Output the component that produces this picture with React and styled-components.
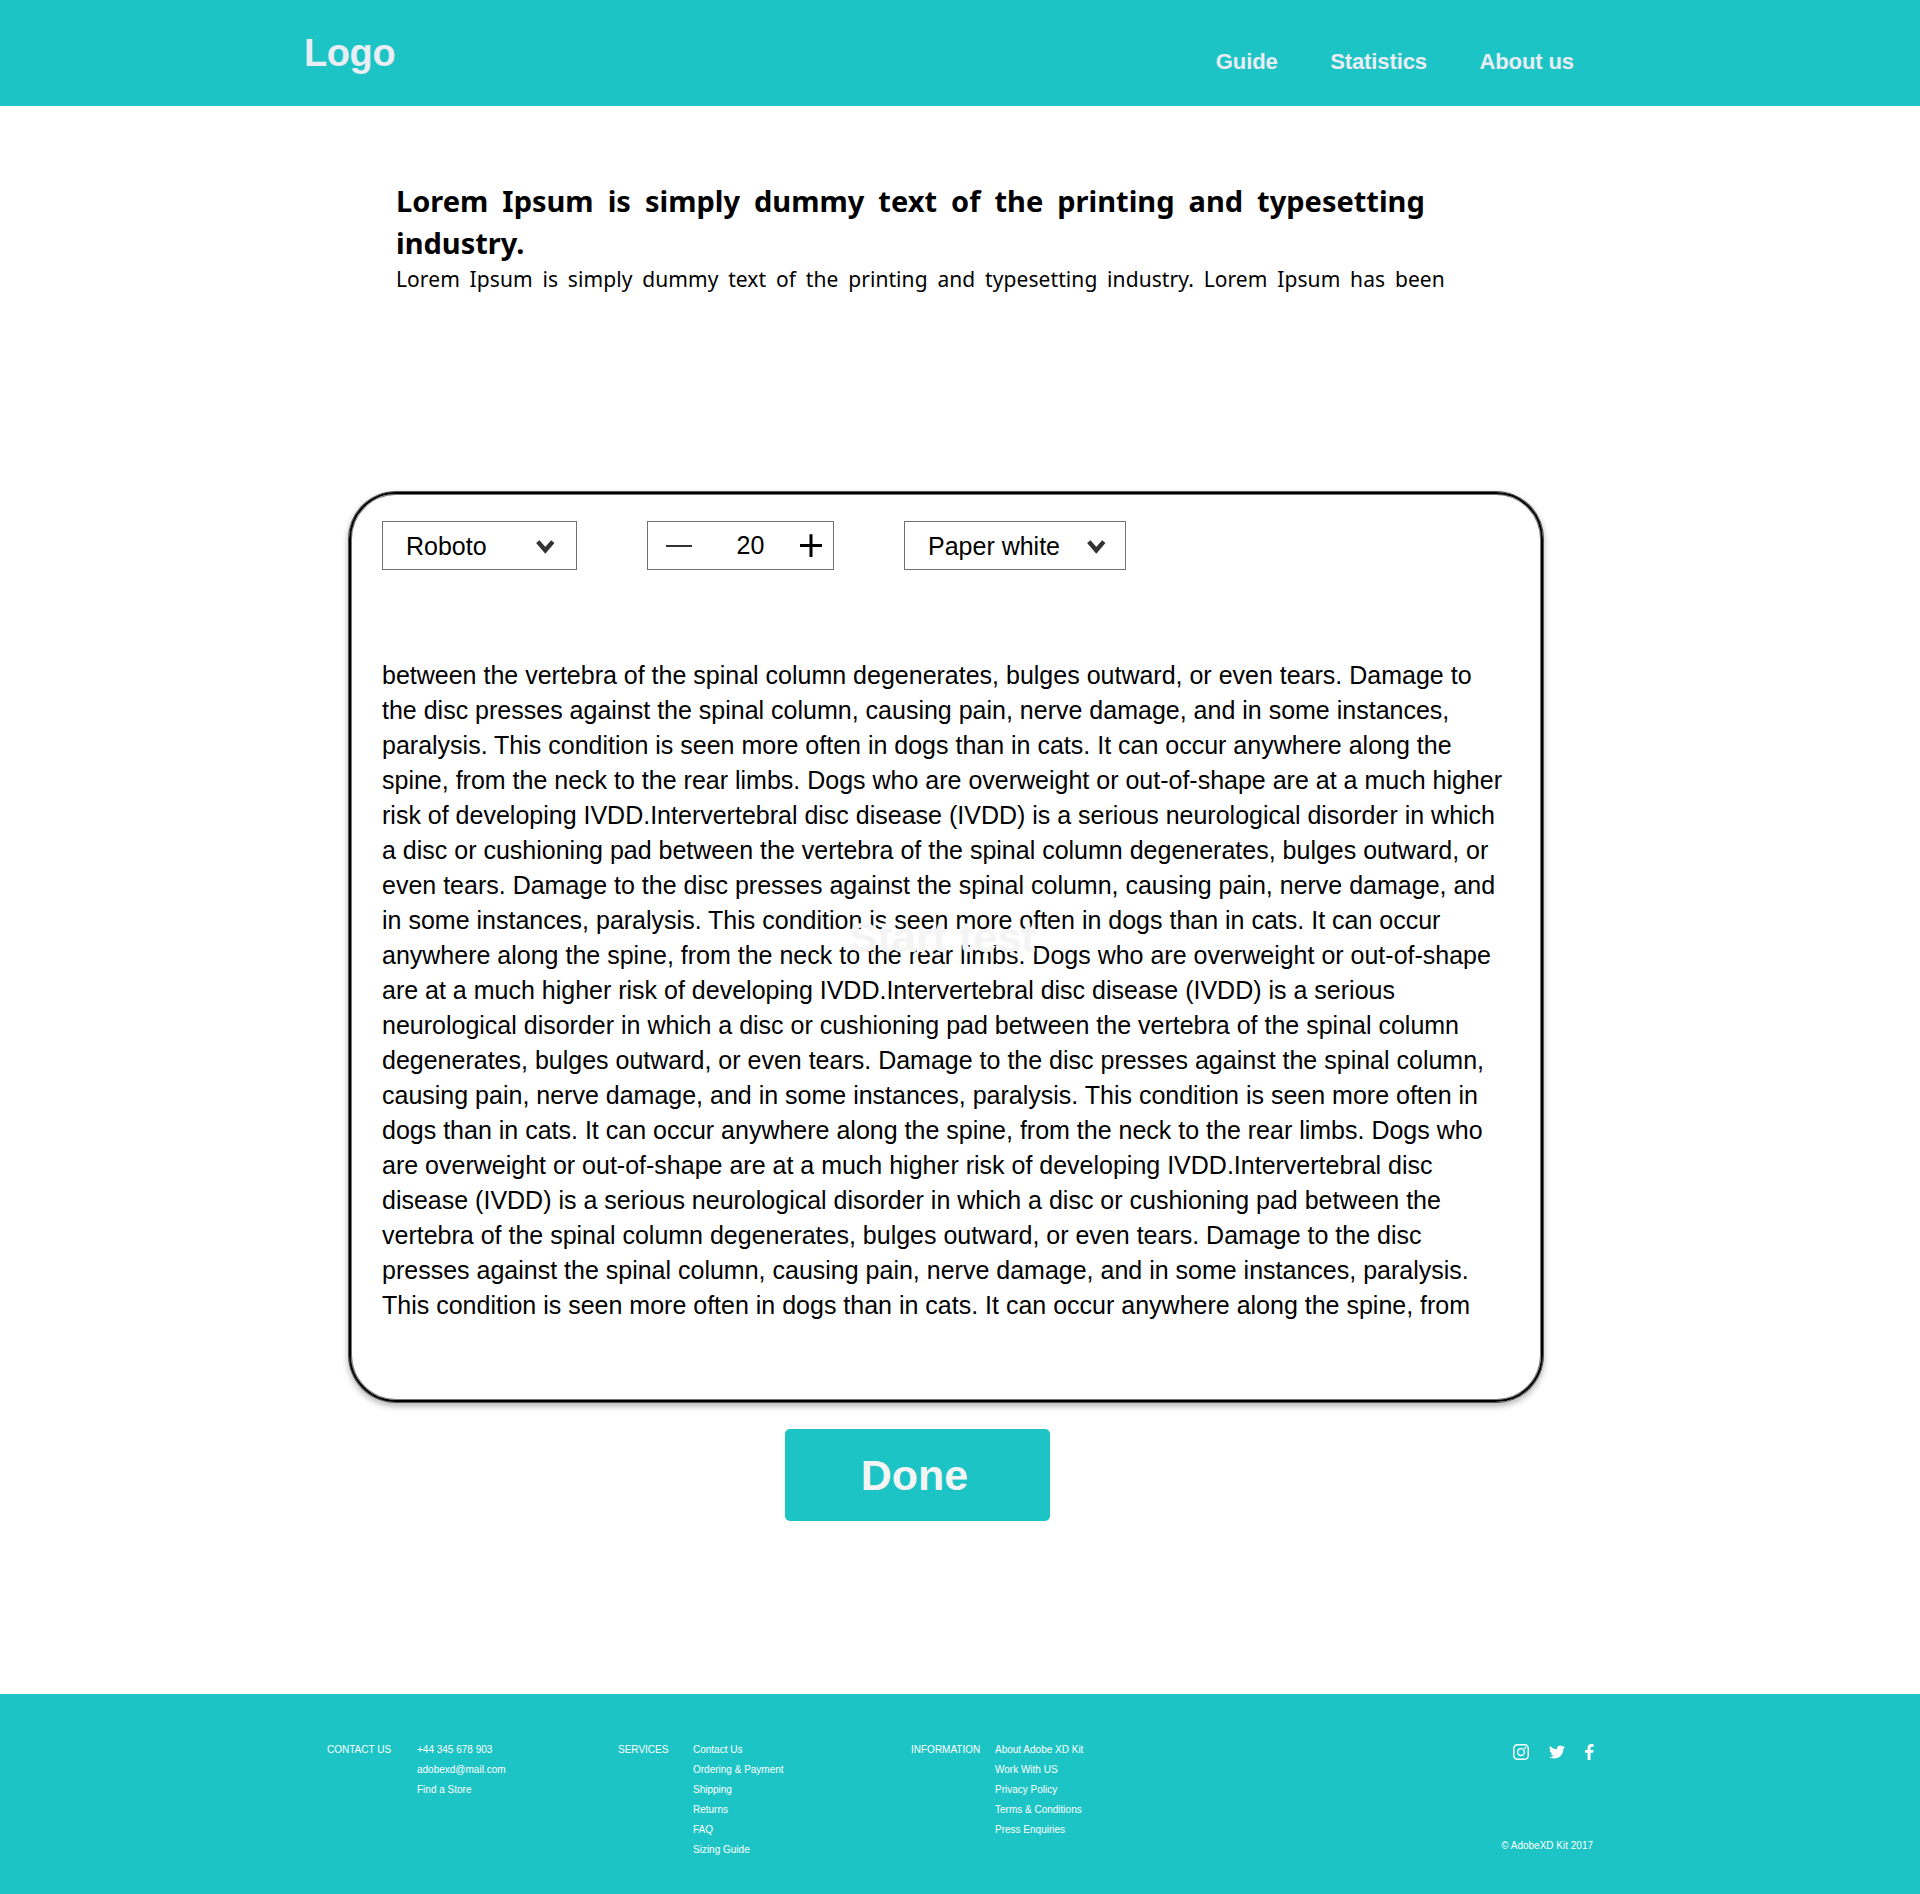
import React from "react";
import styled, { createGlobalStyle } from "styled-components";

const TEAL = "#1dc4c5";

const GlobalStyle = createGlobalStyle`
  * { box-sizing: border-box; }
  body {
    margin: 0;
    background: #fff;
    color: #000;
    font-family: "Liberation Sans", Arial, sans-serif;
  }
  h1, p, ul { margin: 0; padding: 0; }
  ul { list-style: none; }
`;

const Page = styled.div`
  width: 1920px;
  height: 1894px;
  display: flex;
  flex-direction: column;
  overflow: hidden;
`;

const Header = styled.header`
  height: 106px;
  flex: none;
  display: flex;
  justify-content: space-between;
  padding: 0 346px 0 304px;
  background: ${TEAL};
  color: #e9edf4;
  font-weight: 700;
`;

const Logo = styled.div`
  padding-top: 31px;
  font-size: 38px;
  line-height: 44px;
  letter-spacing: -0.4px;
`;

const Nav = styled.nav`
  display: flex;
  gap: 52.5px;
  padding-top: 49px;
  font-size: 22px;
  line-height: 26px;
  letter-spacing: -0.1px;
`;

const Main = styled.main`
  flex: 1;
  display: flex;
  flex-direction: column;
`;

const Intro = styled.section`
  height: 386px;
  padding: 74px 0 0 396px;
  font-family: "Noto Sans", sans-serif;
  white-space: pre-line;
`;

const Title = styled.h1`
  font-size: 29px;
  line-height: 42px;
  font-weight: 700;
  word-spacing: 6.5px;
`;

const Subtitle = styled.p`
  font-size: 21px;
  line-height: 30px;
  letter-spacing: 0.08px;
  word-spacing: 4.2px;
`;

const Card = styled.section`
  position: relative;
  width: 1194px;
  height: 910px;
  margin-left: 349px;
  padding: 27px 31px;
  border: 2px solid #000;
  border-radius: 47px;
  box-shadow: inset 0 0 0 1px #777, 0 0 0 1px #555, 0 3px 6px 1px rgba(0, 0, 0, 0.3);
`;

const Toolbar = styled.div`
  display: flex;
  gap: 70px;
`;

const Field = styled.div`
  width: ${(p) => p.$width}px;
  height: 49px;
  display: flex;
  align-items: center;
  justify-content: space-between;
  padding: ${(p) => p.$padding};
  border: 1px solid #707070;
  font-size: 25px;
  line-height: 29px;
`;

const Count = styled.span`
  margin-left: 9px;
`;

const Passage = styled.p`
  margin-top: 88px;
  font-size: 25px;
  line-height: 35px;
  white-space: pre;
`;

const StartLabel = styled.span`
  position: absolute;
  left: 498px;
  top: 418px;
  color: #f4f4f4;
  font-size: 43px;
  line-height: 50px;
  font-weight: 700;
  white-space: nowrap;
`;

const DoneButton = styled.button`
  width: 265px;
  height: 92px;
  margin: 27px 0 0 785px;
  padding: 0 6px 0 0;
  border: 0;
  border-radius: 5px;
  background: ${TEAL};
  color: #f4f4f4;
  font: 700 43px/50px "Liberation Sans", Arial, sans-serif;
`;

const Footer = styled.footer`
  height: 200px;
  flex: none;
  display: flex;
  padding: 46px 326px 0 327px;
  background: ${TEAL};
  color: #fff;
  font-size: 10px;
  line-height: 20px;
`;

const LinkGroup = styled.div`
  display: grid;
  grid-template-columns: ${(p) => p.$label}px auto;
  width: ${(p) => p.$width}px;
  flex: none;
  white-space: nowrap;
`;

const FooterEnd = styled.div`
  margin-left: auto;
  display: flex;
  flex-direction: column;
  align-items: flex-end;
`;

const Socials = styled.div`
  height: 20px;
  margin-bottom: 76px;
  padding-top: 4px;
  display: flex;
  gap: 20px;
  svg { display: block; }
`;

const Copyright = styled.span`
  padding-right: 1px;
`;

const lines = [
  "between the vertebra of the spinal column degenerates, bulges outward, or even tears. Damage to",
  "the disc presses against the spinal column, causing pain, nerve damage, and in some instances,",
  "paralysis. This condition is seen more often in dogs than in cats. It can occur anywhere along the",
  "spine, from the neck to the rear limbs. Dogs who are overweight or out-of-shape are at a much higher",
  "risk of developing IVDD.Intervertebral disc disease (IVDD) is a serious neurological disorder in which",
  "a disc or cushioning pad between the vertebra of the spinal column degenerates, bulges outward, or",
  "even tears. Damage to the disc presses against the spinal column, causing pain, nerve damage, and",
  "in some instances, paralysis. This condition is seen more often in dogs than in cats. It can occur",
  "anywhere along the spine, from the neck to the rear limbs. Dogs who are overweight or out-of-shape",
  "are at a much higher risk of developing IVDD.Intervertebral disc disease (IVDD) is a serious",
  "neurological disorder in which a disc or cushioning pad between the vertebra of the spinal column",
  "degenerates, bulges outward, or even tears. Damage to the disc presses against the spinal column,",
  "causing pain, nerve damage, and in some instances, paralysis. This condition is seen more often in",
  "dogs than in cats. It can occur anywhere along the spine, from the neck to the rear limbs. Dogs who",
  "are overweight or out-of-shape are at a much higher risk of developing IVDD.Intervertebral disc",
  "disease (IVDD) is a serious neurological disorder in which a disc or cushioning pad between the",
  "vertebra of the spinal column degenerates, bulges outward, or even tears. Damage to the disc",
  "presses against the spinal column, causing pain, nerve damage, and in some instances, paralysis.",
  "This condition is seen more often in dogs than in cats. It can occur anywhere along the spine, from",
];

const groups = [
  { title: "CONTACT US", label: 90, width: 291, items: ["+44 345 678 903", "adobexd@mail.com", "Find a Store"] },
  { title: "SERVICES", label: 75, width: 293, items: ["Contact Us", "Ordering & Payment", "Shipping", "Returns", "FAQ", "Sizing Guide"] },
  { title: "INFORMATION", label: 84, width: 260, items: ["About Adobe XD Kit", "Work With US", "Privacy Policy", "Terms & Conditions", "Press Enquiries"] },
];

const Chevron = () => (
  <svg width="19" height="14" viewBox="0 0 19 14">
    <path d="M1.8 1.6L9.3 10.3L16.8 1.6" fill="none" stroke="#333" strokeWidth="4.4" />
  </svg>
);

const Minus = () => (
  <svg width="26" height="24" viewBox="0 0 26 24">
    <path d="M0 12H26" stroke="#333" strokeWidth="2" />
  </svg>
);

const Plus = () => (
  <svg width="22" height="24" viewBox="0 0 22 24">
    <path d="M0 11.6H22M11 0.2V23" stroke="#000" strokeWidth="3" />
  </svg>
);

const Instagram = () => (
  <svg width="16" height="16" viewBox="0 0 16 16" fill="none" stroke="#fff" strokeWidth="1.45">
    <rect x="0.72" y="0.72" width="14.56" height="14.56" rx="3.9" />
    <circle cx="8" cy="8" r="3.4" />
    <circle cx="12.3" cy="3.7" r="0.95" fill="#fff" stroke="none" />
  </svg>
);

const Twitter = () => (
  <svg width="16" height="16" viewBox="0 0 24 24" fill="#fff">
    <path d="M23.95 4.57a10 10 0 0 1-2.82.77 4.96 4.96 0 0 0 2.16-2.72c-.95.55-2 .95-3.13 1.18a4.92 4.92 0 0 0-8.38 4.48C7.69 8.09 4.07 6.13 1.64 3.16a4.92 4.92 0 0 0 1.52 6.57 4.9 4.9 0 0 1-2.23-.61v.06a4.92 4.92 0 0 0 3.95 4.83 5 5 0 0 1-2.21.08 4.94 4.94 0 0 0 4.6 3.42A9.87 9.87 0 0 1 0 19.54a14 14 0 0 0 7.55 2.21c9.05 0 14-7.5 14-13.98 0-.21 0-.42-.02-.63a9.94 9.94 0 0 0 2.42-2.57z" />
  </svg>
);

const Facebook = () => (
  <svg width="9" height="16" viewBox="0 0 9 16" fill="#fff">
    <path d="M2.6 16V8.7H0V5.9H2.6V3.8C2.6 1.3 4.1 0 6.4 0C7.4 0 8.3.1 8.6.1V2.7H7C5.8 2.7 5.5 3.3 5.5 4.1V5.9H8.5L8.1 8.7H5.5V16Z" />
  </svg>
);

export default function App() {
  return (
    <Page>
      <GlobalStyle />
      <Header>
        <Logo>Logo</Logo>
        <Nav>
          <span>Guide</span>
          <span>Statistics</span>
          <span>About us</span>
        </Nav>
      </Header>
      <Main>
        <Intro>
          <Title>{"Lorem Ipsum is simply dummy text of the printing and typesetting\nindustry."}</Title>
          <Subtitle>Lorem Ipsum is simply dummy text of the printing and typesetting industry. Lorem Ipsum has been</Subtitle>
        </Intro>
        <Card>
          <Toolbar>
            <Field $width={195} $padding="2px 21px 0 23px">
              <span>Roboto</span>
              <Chevron />
            </Field>
            <Field $width={187} $padding="0 11px 0 18px">
              <Minus />
              <Count>20</Count>
              <Plus />
            </Field>
            <Field $width={222} $padding="2px 19px 0 23px">
              <span>Paper white</span>
              <Chevron />
            </Field>
          </Toolbar>
          <Passage>{lines.join("\n")}</Passage>
          <StartLabel>Start test</StartLabel>
        </Card>
        <DoneButton>Done</DoneButton>
      </Main>
      <Footer>
        {groups.map((g) => (
          <LinkGroup key={g.title} $label={g.label} $width={g.width}>
            <span>{g.title}</span>
            <ul>
              {g.items.map((item) => (
                <li key={item}>{item}</li>
              ))}
            </ul>
          </LinkGroup>
        ))}
        <FooterEnd>
          <Socials>
            <Instagram />
            <Twitter />
            <Facebook />
          </Socials>
          <Copyright>© AdobeXD Kit 2017</Copyright>
        </FooterEnd>
      </Footer>
    </Page>
  );
}
